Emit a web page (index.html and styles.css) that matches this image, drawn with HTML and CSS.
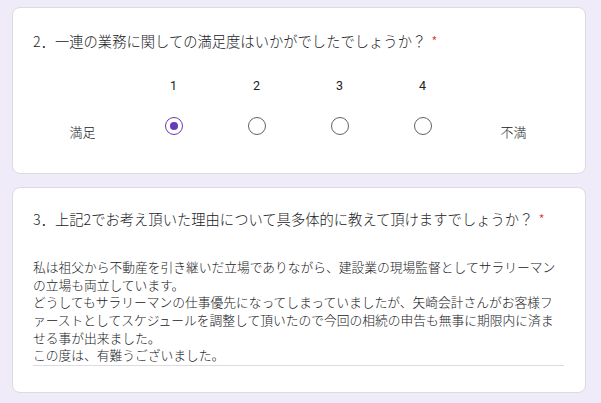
FILE: index.html
```html
<!DOCTYPE html>
<html lang="ja">
<head>
<meta charset="utf-8">
<link rel="stylesheet" href="styles.css">
</head>
<body>
<div class="page">
  <section class="card card-scale">
    <div class="q-title q1">2．一連の業務に関しての満足度はいかがでしたでしょうか？<span class="req">*</span></div>
    <div class="scale">
      <div class="num c2">1</div>
      <div class="num c3">2</div>
      <div class="num c4">3</div>
      <div class="num c5">4</div>
      <div class="end-label c1">満足</div>
      <div class="opt c2"><span class="radio checked"></span></div>
      <div class="opt c3"><span class="radio"></span></div>
      <div class="opt c4"><span class="radio"></span></div>
      <div class="opt c5"><span class="radio"></span></div>
      <div class="end-label c6">不満</div>
    </div>
  </section>
  <section class="card card-text">
    <div class="q-title q2">3．上記2でお考え頂いた理由について具多体的に教えて頂けますでしょうか？<span class="req">*</span></div>
    <div class="answer">私は祖父から不動産を引き継いだ立場でありながら、建設業の現場監督としてサラリーマン<br>の立場も両立しています。<br>どうしてもサラリーマンの仕事優先になってしまっていましたが、矢崎会計さんがお客様フ<br>ァーストとしてスケジュールを調整して頂いたので今回の相続の申告も無事に期限内に済ま<br>せる事が出来ました。<br>この度は、有難うございました。</div>
  </section>
</div>
</body>
</html>
```
FILE: styles.css
```css
html, body {
  margin: 0;
  padding: 0;
  background: #f0ebf8;
}
body {
  font-family: "Noto Sans CJK JP", "Noto Sans", sans-serif;
  font-weight: 300;
  color: #202124;
}
.page {
  display: flex;
  flex-direction: column;
  gap: 13px;
  padding: 7px 0 0 12px;
  width: 574px;
}
.card {
  background: #fff;
  border: 1px solid #dadce0;
  border-radius: 8px;
  padding: 0 21px 0 20px;
}
.card-scale {
  height: 165px;
}
.card-text {
  height: 204px;
}
.q-title {
  font-size: 14.3px;
  line-height: 21px;
  white-space: nowrap;
}
.q1 { margin-top: 22px; }
.q2 { margin-top: 20px; }
.req {
  color: #d93025;
  margin-left: 5px;
  font-size: 14px;
}
.scale {
  display: grid;
  grid-template-columns: 99px 83px 83px 83px 83px 99px;
  grid-template-rows: 20px 40px;
  row-gap: 10px;
  margin-top: 24px;
  width: 530px;
}
.c1 { grid-column: 1; }
.c2 { grid-column: 2; }
.c3 { grid-column: 3; }
.c4 { grid-column: 4; }
.c5 { grid-column: 5; }
.c6 { grid-column: 6; }
.num {
  grid-row: 1;
  text-align: center;
  font-family: Roboto, "Liberation Sans", sans-serif;
  font-weight: 400;
  font-size: 12.5px;
  line-height: 20px;
}
.end-label {
  grid-row: 2;
  text-align: center;
  font-size: 13px;
  line-height: 20px;
  margin-top: 16px;
}
.opt {
  grid-row: 2;
  display: flex;
  align-items: center;
  justify-content: center;
}
.radio {
  box-sizing: border-box;
  width: 18px;
  height: 18px;
  border: 1.6px solid #5f6368;
  border-radius: 50%;
  display: flex;
  align-items: center;
  justify-content: center;
}
.radio.checked {
  border-color: #673ab7;
}
.radio.checked::after {
  content: "";
  width: 8px;
  height: 8px;
  border-radius: 50%;
  background: #673ab7;
}
.answer {
  margin-top: 28px;
  width: 531px;
  font-size: 12.75px;
  line-height: 17.65px;
  border-bottom: 1px solid #dadce0;
  padding-bottom: 1px;
}
```
